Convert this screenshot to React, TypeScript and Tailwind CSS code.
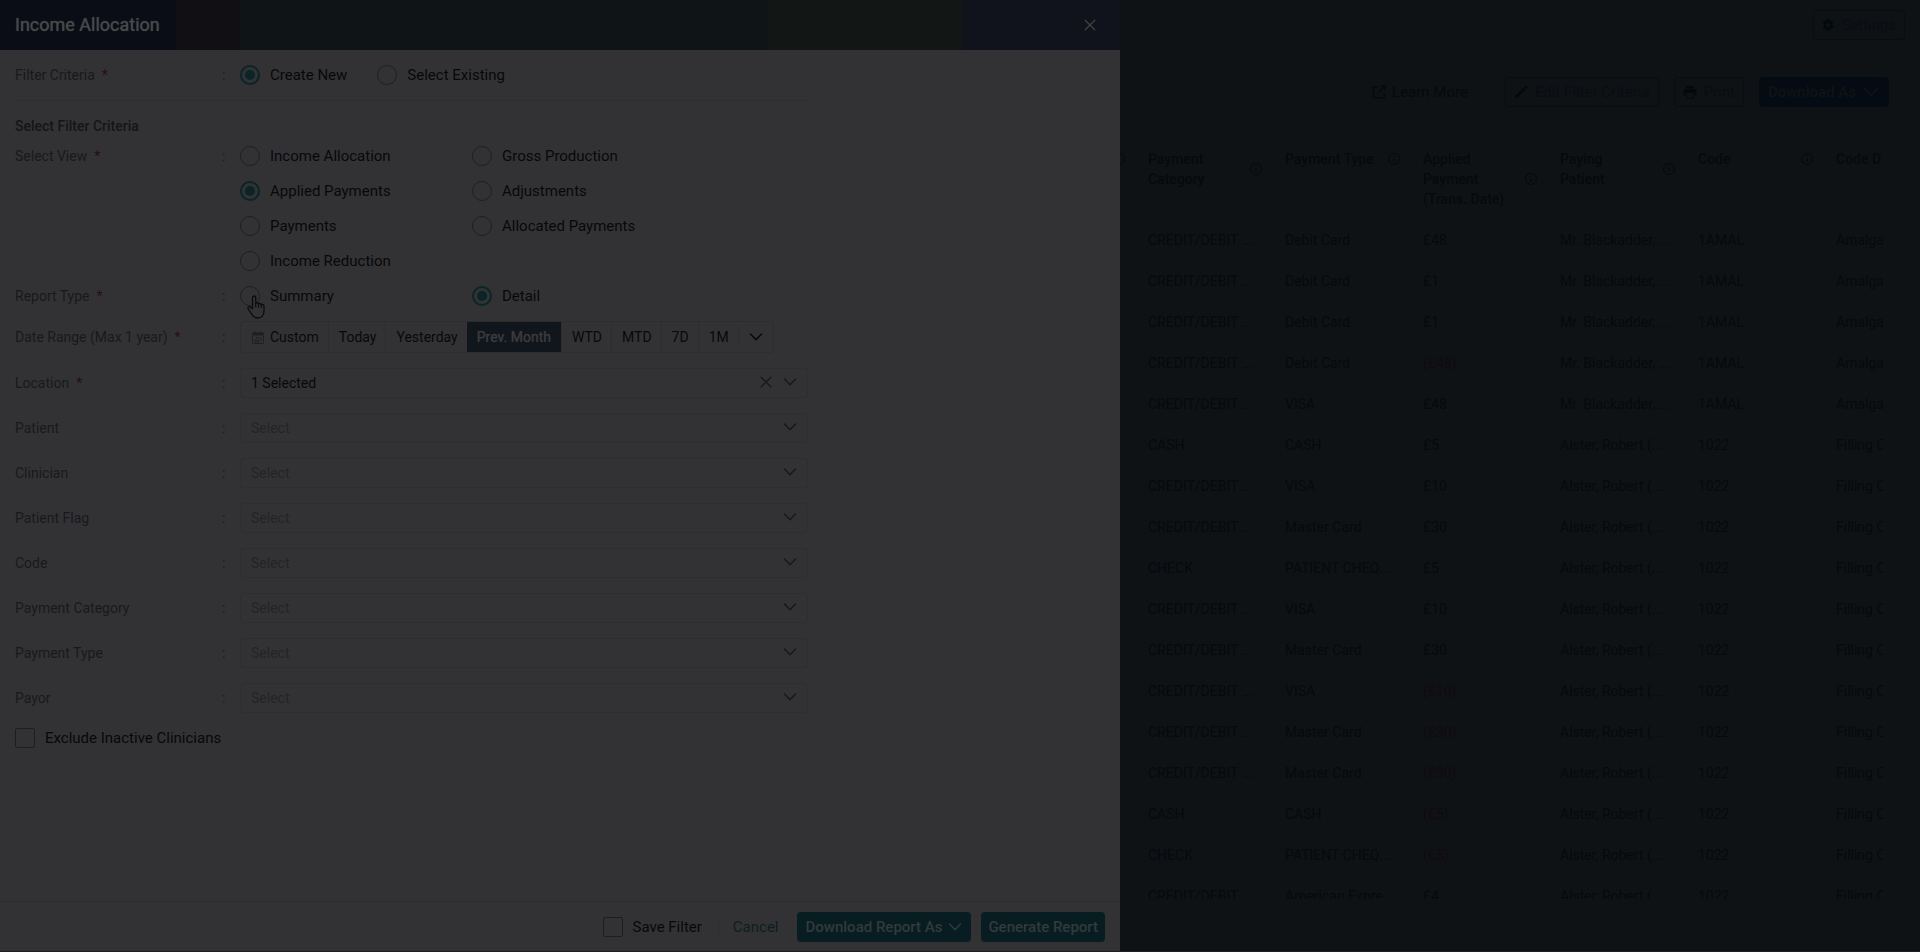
import React from 'react';

const Chevron: React.FC<{ className?: string }> = ({ className = 'w-[14px] h-2' }) => (
    <svg viewBox="0 0 14 8" fill="none" stroke="currentColor" strokeWidth="1.5" strokeLinecap="round" strokeLinejoin="round" className={`shrink-0 ${className}`}>
        <path d="M1.5 1 L7 6.7 L12.5 1" />
    </svg>
);

const Cross: React.FC = () => (
    <svg viewBox="0 0 12 12" fill="none" stroke="currentColor" strokeWidth="1.3" strokeLinecap="round" className="w-3 h-3">
        <path d="M1.2 1.2 L10.8 10.8 M10.8 1.2 L1.2 10.8" />
    </svg>
);

const CalendarIcon: React.FC = () => (
    <svg viewBox="0 0 12 13" className="w-3 h-[13px] shrink-0 text-[#1e1f22]">
        <path fill="currentColor" d="M1 1.5h1.6V.4h1.3v1.1h4.2V.4h1.3v1.1H11a1 1 0 0 1 1 1V4.6H0V2.5a1 1 0 0 1 1-1z" />
        <path fill="none" stroke="currentColor" d="M.5 5v6.500a1 1 0 0 0 1 1h9a1 1 0 0 0 1-1V5" />
        <path fill="currentColor" d="M4 6h1.200v1.200H4zM6 6h1.200v1.200H6zM8 6h1.200v1.200H8zM2.500 8.200h1.200v1.200H2.500zM4.500 8.200h1.200v1.200H4.500zM6.500 8.200h1.200v1.200H6.500zM8.500 8.200h1.200v1.200H8.500zM2.500 10.200h5v1h-5z" />
    </svg>
);

const InfoIcon: React.FC = () => (
    <svg viewBox="0 0 12 12" fill="none" stroke="currentColor" className="w-3 h-3 shrink-0">
        <circle cx="6" cy="6" r="5.5" />
        <path d="M6 5.200v3.800M6 2.800v1.200" strokeWidth="1.2" />
    </svg>
);

const GearIcon: React.FC = () => (
    <svg viewBox="0 0 12 12" className="w-3 h-3 shrink-0 text-[#04090c]">
        <path fill="currentColor" fillRule="evenodd" d="M4.800 0h2.400l.3 1.600 1 .5L10 1.500l1.300 2-1.200 1.100v1.200l1.200 1.200v1l-1.200 1.700-1.500-.5-1 .6L7.200 12H4.800l-.4-1.700-1-.6-1.500.5L.700 8.200l1.200-1.200V5L.700 3.700 2 1.500l1.500.6 1-.5zM6 4a2 2 0 1 0 0 4 2 2 0 0 0 0-4z" />
    </svg>
);

const PencilIcon: React.FC = () => (
    <svg viewBox="0 0 14 14" fill="currentColor" className="w-[14px] h-[14px] shrink-0 text-[#05080a]">
        <path d="M11 1a1 1 0 0 1 1.400 0l.7.7a1 1 0 0 1 0 1.400l-1 1L10 2zM9.300 2.700l2.100 2.100-7.600 7.500-2.900.9.800-3z" />
    </svg>
);

const PrinterIcon: React.FC = () => (
    <svg viewBox="0 0 14 14" fill="currentColor" className="w-[14px] h-[14px] shrink-0 text-[#05080a]">
        <path d="M3 1h8v2.500H3zM2 4.300h10A1.500 1.500 0 0 1 13.500 5.800V10.500H11.500V8H2.500v2.500H.5V5.800A1.500 1.500 0 0 1 2 4.300z" />
        <path fill="none" stroke="currentColor" d="M3.500 8.500v4.500h7V8.500" />
    </svg>
);

const OpenIcon: React.FC = () => (
    <svg viewBox="0 0 14 14" fill="none" stroke="currentColor" strokeWidth="1.4" className="w-[14px] h-[14px] shrink-0">
        <path d="M6 2H1.500v10.800h10.800V8M8.500 1h4.700v4.700M13 1.200L6 8.200" />
    </svg>
);

const HandPointer: React.FC = () => (
    <svg viewBox="0 0 18 24" className="absolute left-[7px] top-[9px] w-[18px] h-6 pointer-events-none">
        <path
            fill="#323234" stroke="#0b0b0c" strokeWidth="1.3" strokeLinejoin="round"
            d="M5.500 13.800V2.600a1.600 1.600 0 0 1 3.200 0v5.600c.8-.9 2.500-.6 2.800.6.900-.7 2.400-.3 2.600.8 1.200-.5 2.900.1 2.900 1.700v4.900c0 4-2.200 6.800-6.300 6.800-3.400 0-4.900-1.500-6.300-4.300L1 13.500c-.5-1.300 1-2.300 2.200-1.400z"
        />
        <path fill="none" stroke="#0b0b0c" strokeWidth="1.1" d="M8.700 8v4.500M11.500 8.700v4M14.200 9.600v3.300" />
    </svg>
);

const radioClass = 'appearance-none w-5 h-5 shrink-0 rounded-full border border-[#1f1f21] grid place-content-center checked:border-2 checked:border-[#0b2427] checked:before:block checked:before:w-[10px] checked:before:h-[10px] checked:before:rounded-full checked:before:bg-[#0b2427]';
const checkboxClass = 'appearance-none w-5 h-5 shrink-0 rounded-[2px] border border-[#1e1e20]';

const Radio: React.FC<{ name: string; label: string; checked?: boolean; children?: React.ReactNode }> = ({ name, label, checked, children }) => (
    <label className="relative flex items-center gap-[10px] text-[15px] leading-5 text-[#08080a]">
        <input type="radio" name={name} defaultChecked={checked} className={radioClass} />
        {label}
        {children}
    </label>
);

const RowLabel: React.FC<{ text: string; required?: boolean; htmlFor?: string }> = ({ text, required, htmlFor }) => {
    const content = (
        <>
            {text}
            {required && <span className="ml-[7px] text-[#260f12]">*</span>}
        </>
    );
    return (
        <div className="flex w-[225px] shrink-0 text-sm leading-5 text-[#18191c]">
            {htmlFor ? <label htmlFor={htmlFor} className="w-[207px]">{content}</label> : <span className="w-[207px]">{content}</span>}
            <span>:</span>
        </div>
    );
};

const RANGES = ['Today', 'Yesterday', 'Prev. Month', 'WTD', 'MTD', '7D', '1M'];

const FIELDS: { id: string; label: string; value?: string; required?: boolean }[] = [
    { id: 'location', label: 'Location', value: '1 Selected', required: true },
    { id: 'patient', label: 'Patient' },
    { id: 'clinician', label: 'Clinician' },
    { id: 'patient-flag', label: 'Patient Flag' },
    { id: 'code', label: 'Code' },
    { id: 'payment-category', label: 'Payment Category' },
    { id: 'payment-type', label: 'Payment Type' },
    { id: 'payor', label: 'Payor' },
];

const COLUMNS = [
    { label: '', width: 'w-[18px]' },
    { label: 'Payment\nCategory', width: 'w-[137px]' },
    { label: 'Payment Type', width: 'w-[138px]' },
    { label: 'Applied\nPayment\n(Trans. Date)', width: 'w-[137px]' },
    { label: 'Paying\nPatient', width: 'w-[138px]' },
    { label: 'Code', width: 'w-[138px]' },
];

const CARD = 'CREDIT/DEBIT ...';
const BLACKADDER = ['Mr. Blackadder, ...', '1AMAL', 'Amalga'];
const ALSTER = ['Alster, Robert (...', '1022', 'Filling C'];

const ROWS = [
    [CARD, 'Debit Card', '£48', ...BLACKADDER],
    [CARD, 'Debit Card', '£1', ...BLACKADDER],
    [CARD, 'Debit Card', '£1', ...BLACKADDER],
    [CARD, 'Debit Card', '(£48)', ...BLACKADDER],
    [CARD, 'VISA', '£48', ...BLACKADDER],
    ['CASH', 'CASH', '£5', ...ALSTER],
    [CARD, 'VISA', '£10', ...ALSTER],
    [CARD, 'Master Card', '£30', ...ALSTER],
    ['CHECK', 'PATIENT CHEQ...', '£5', ...ALSTER],
    [CARD, 'VISA', '£10', ...ALSTER],
    [CARD, 'Master Card', '£30', ...ALSTER],
    [CARD, 'VISA', '(£10)', ...ALSTER],
    [CARD, 'Master Card', '(£30)', ...ALSTER],
    [CARD, 'Master Card', '(£30)', ...ALSTER],
    ['CASH', 'CASH', '(£5)', ...ALSTER],
    ['CHECK', 'PATIENT CHEQ...', '(£5)', ...ALSTER],
    [CARD, 'American Expre...', '£4', ...ALSTER],
];

const FilterDrawer: React.FC = () => (
    <aside className="w-7/12 shrink-0 flex flex-col bg-[#323234]">
        {/* Header */}
        <header className="flex items-center justify-between h-[50px] shrink-0 pl-[15px] pr-6 bg-[linear-gradient(90deg,#0a0d15_0_15.7%,#110f14_15.7%_21.4%,#0f1416_21.4%_68.6%,#121614_68.6%_85.8%,#10131b_85.8%)]">
            <h1 className="text-lg text-[#47494a] [text-shadow:0_0_1px_currentColor]">Income Allocation</h1>
            <button type="button" aria-label="Close" className="text-[#40423f]"><Cross /></button>
        </header>

        {/* Form */}
        <form className="flex-1 min-h-0 overflow-hidden p-[15px]">
            <div className="max-w-[793px]">
                <div className="flex pb-[15px] border-b border-[#2f2e2d]">
                    <RowLabel text="Filter Criteria" required />
                    <div className="flex gap-[30px]">
                        <Radio name="criteria" label="Create New" checked />
                        <Radio name="criteria" label="Select Existing" />
                    </div>
                </div>

                <h2 className="mt-[15px] mb-[10px] text-sm leading-5 font-medium text-[#141518]">Select Filter Criteria</h2>

                <div className="flex flex-col gap-[15px]">
                    <div className="flex">
                        <RowLabel text="Select View" required />
                        <div className="grid grid-cols-[232px_auto] gap-y-[15px]">
                            <Radio name="view" label="Income Allocation" />
                            <Radio name="view" label="Gross Production" />
                            <Radio name="view" label="Applied Payments" checked />
                            <Radio name="view" label="Adjustments" />
                            <Radio name="view" label="Payments" />
                            <Radio name="view" label="Allocated Payments" />
                            <Radio name="view" label="Income Reduction" />
                        </div>
                    </div>

                    <div className="flex">
                        <RowLabel text="Report Type" required />
                        <div className="grid grid-cols-[232px_auto]">
                            <Radio name="type" label="Summary"><HandPointer /></Radio>
                            <Radio name="type" label="Detail" checked />
                        </div>
                    </div>

                    <div className="flex items-center">
                        <RowLabel text="Date Range (Max 1 year)" required />
                        <div className="flex h-8 rounded border border-[#2e2d2b] text-sm text-[#08080a]">
                            <button type="button" className="flex items-center gap-[6px] pl-[11px] pr-[9px]">
                                <CalendarIcon />
                                Custom
                            </button>
                            {RANGES.map(range => (
                                <button
                                    key={range}
                                    type="button"
                                    className={range === 'Prev. Month'
                                        ? 'px-[10px] bg-[#11151c] text-[#3a3b3c] [text-shadow:0_0_1px_currentColor]'
                                        : 'pl-[10px] pr-[9px] border-l border-[#2d2d2e]'}
                                >
                                    {range}
                                </button>
                            ))}
                            <button type="button" aria-label="More ranges" className="my-[5px] px-[10px] border-l border-[#2d2d2e]">
                                <Chevron />
                            </button>
                        </div>
                    </div>

                    {FIELDS.map(field => (
                        <div key={field.id} className="flex items-center">
                            <RowLabel text={field.label} required={field.required} htmlFor={field.id} />
                            <div className="relative flex-1">
                                <select
                                    id={field.id}
                                    className={`block w-full h-[30px] appearance-none rounded border border-[#2f2e2d] px-[10px] text-sm ${field.value ? 'text-[#08080a]' : 'text-[#232426]'}`}
                                >
                                    <option>{field.value ?? 'Select'}</option>
                                </select>
                                <div className="absolute inset-y-0 right-[11px] flex items-center gap-[11px] pb-[3px] text-[#19191b] pointer-events-none">
                                    {field.value && <button type="button" aria-label="Clear"><Cross /></button>}
                                    <Chevron />
                                </div>
                            </div>
                        </div>
                    ))}

                    <label className="flex items-center gap-[10px] text-[15px] leading-5 text-[#08080a]">
                        <input type="checkbox" className={checkboxClass} />
                        Exclude Inactive Clinicians
                    </label>
                </div>
            </div>
        </form>

        {/* Footer */}
        <footer className="flex items-center justify-end shrink-0 px-[15px] pt-[10px] pb-[9px] border-t border-[#2c2c2e] text-[15px]">
            <label className="flex items-center gap-[10px] pr-4 border-r border-[#2e2e2f] leading-5 text-[#08080a]">
                <input type="checkbox" className={checkboxClass} />
                Save Filter
            </label>
            <button type="button" className="px-[14px] text-[#0d1e21]">Cancel</button>
            <button type="button" className="flex items-center gap-[6px] h-[30px] ml-1 px-[9px] rounded bg-[#081d22] font-medium text-[#323a3c]">
                Download Report As
                <Chevron />
            </button>
            <button type="button" className="h-[30px] ml-[10px] px-[7px] rounded bg-[#081d22] font-medium text-[#323a3c]">Generate Report</button>
        </footer>
    </aside>
);

const ReportPage: React.FC = () => {
    const outline = 'flex items-center gap-[7px] h-[30px] px-2 rounded border border-[#0a0d10] text-[#090d11]';

    return (
        <main className="flex-1 min-w-0 flex flex-col bg-[#0e1215] text-[#07090c]">
            <div className="flex justify-end py-[10px] pr-[15px] text-[15px]">
                <button type="button" className={outline}><GearIcon />Settings</button>
            </div>

            <div className="flex items-center justify-end gap-[15px] mt-[27px] pr-[31px] text-[15px]">
                <a href="#learn-more" className="flex items-center gap-[6px] mr-[22px]"><OpenIcon />Learn More</a>
                <button type="button" className={outline}><PencilIcon />Edit Filter Criteria</button>
                <button type="button" className={outline}><PrinterIcon />Print</button>
                <button type="button" className="flex items-center gap-[6px] h-[30px] px-[9px] rounded bg-[#050b12] font-medium text-[#0e1317]">
                    Download As
                    <Chevron className="w-[18px] h-[10px]" />
                </button>
            </div>

            {/* Report table, cut off at the bottom of its scroll area */}
            <div className="flex-1 min-h-0 mt-[31px] mb-[52px] mr-[37px] overflow-hidden">
                <table className="table-fixed w-full text-left text-sm">
                    <thead>
                        <tr className="align-top">
                            {COLUMNS.map(col => (
                                <th key={col.label} className={`${col.width} p-0 font-medium`}>
                                    <div className={`flex items-center justify-end pt-[11px] pb-[10px] pr-[13px] overflow-hidden leading-5 ${col.label ? 'pl-[10px]' : 'h-[41px]'}`}>
                                        {col.label && <span className="flex-1 whitespace-pre">{col.label}</span>}
                                        <InfoIcon />
                                    </div>
                                </th>
                            ))}
                            <th className="p-0 pl-[10px] pt-[11px] leading-5 font-medium whitespace-nowrap">Code D</th>
                        </tr>
                    </thead>
                    <tbody>
                        {ROWS.map((row, i) => (
                            <tr key={i} className="h-[41px]">
                                <td />
                                {row.map((cell, j) => (
                                    <td key={j} className={`pl-[10px] whitespace-nowrap ${cell.startsWith('(') ? 'text-[#120a0c]' : ''}`}>
                                        {cell}
                                    </td>
                                ))}
                            </tr>
                        ))}
                    </tbody>
                </table>
            </div>
        </main>
    );
};

export default function App() {
    return (
        <div className="flex h-screen overflow-hidden border-b border-[#231c1e] bg-[#0e1215] font-[Roboto,sans-serif]">
            <FilterDrawer />
            <ReportPage />
        </div>
    );
}
